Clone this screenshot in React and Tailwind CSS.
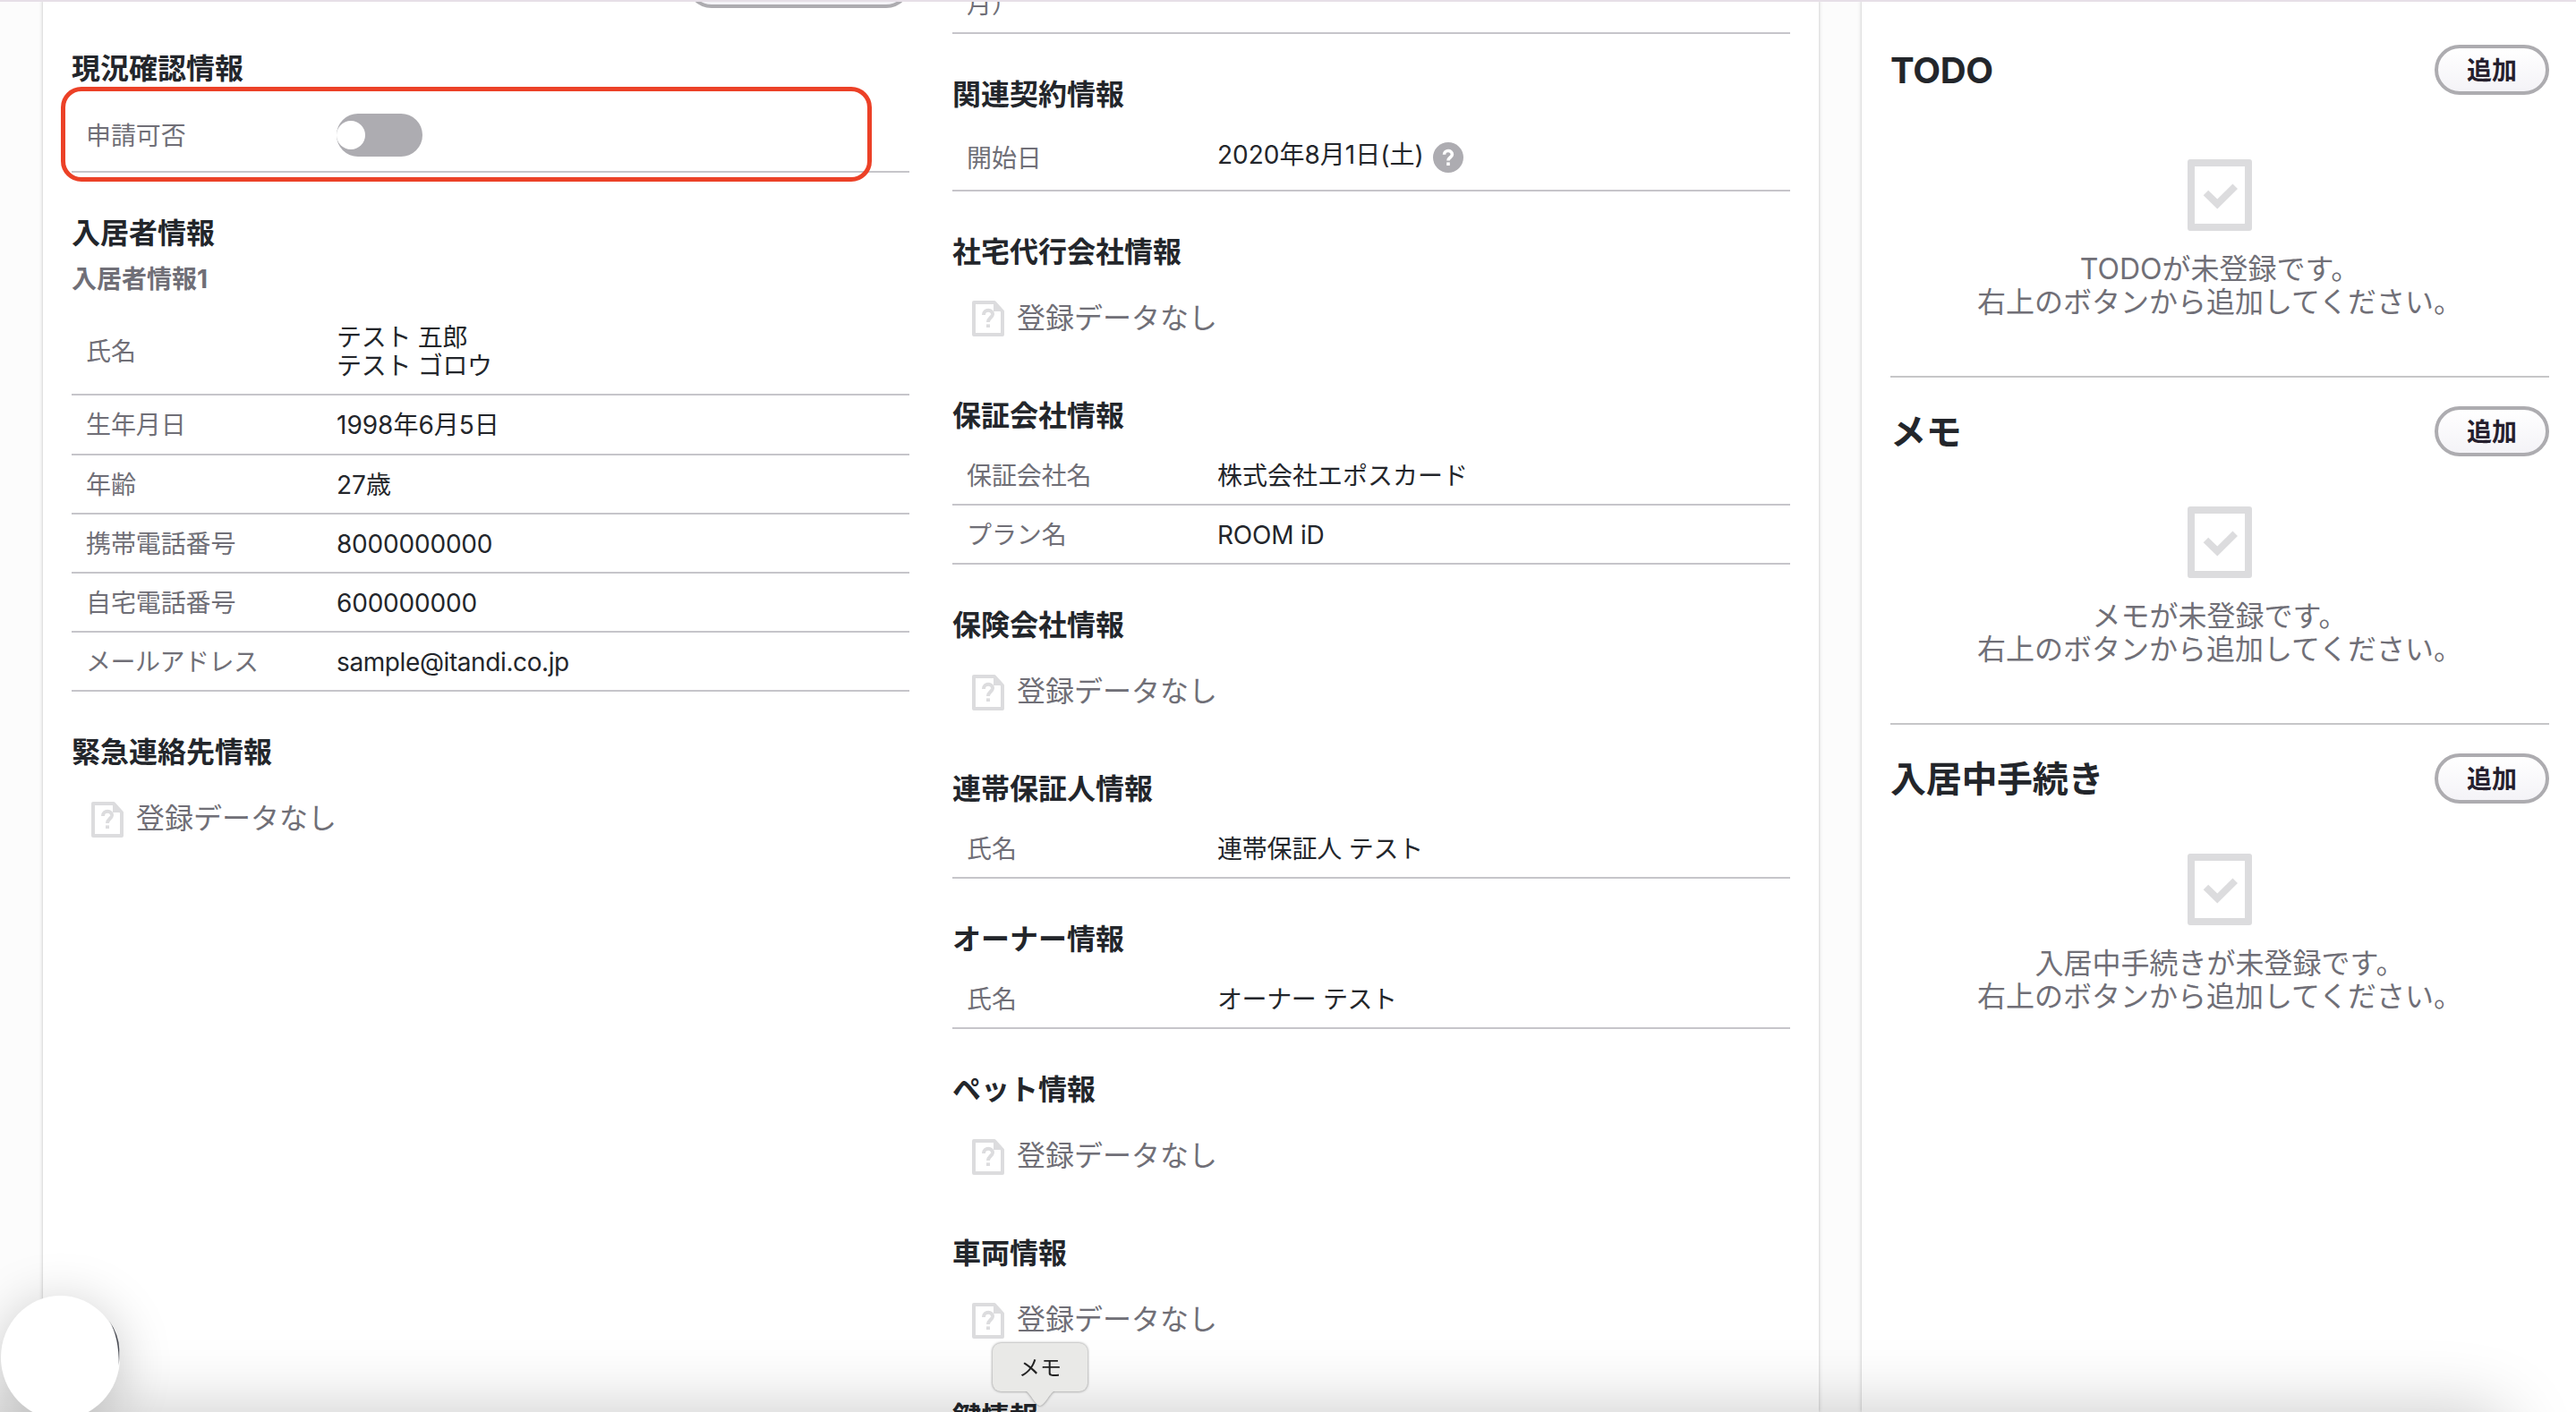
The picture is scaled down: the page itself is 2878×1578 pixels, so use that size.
function EmptyIcon() {
  return (
    <svg width="36" height="40" viewBox="0 0 36 40" className="block shrink-0">
      <path d="M2 2H25L34 12V38H2Z" fill="none" stroke="#dcdcde" strokeWidth="4" strokeLinejoin="round" />
      <path d="M24 2V12H34Z" fill="#dcdcde" />
      <path d="M13 16C13 8.8 23.4 9.4 23 15.4C22.6 19 18 19.4 18 24" fill="none" stroke="#dcdcde" strokeWidth="4" />
      <path d="M16 26.4H20V30H16Z" fill="#dcdcde" />
    </svg>
  );
}

function HelpIcon() {
  return (
    <svg width="34" height="34" viewBox="0 0 34 34" className="-ml-0.5 block shrink-0">
      <circle cx="17" cy="17" r="17" fill="#adacb1" />
      <path d="M12.5 13.8C12.5 8.1 21.5 8.2 21.4 13.6C21.3 17 17 17 17 20.4" fill="none" stroke="#fff" strokeWidth="3.6" />
      <path d="M15.2 22.4H18.8V26H15.2Z" fill="#fff" />
    </svg>
  );
}

function CheckIcon() {
  return (
    <svg width="72" height="80" viewBox="0 0 72 80" className="block">
      <path
        d="M3 0H69Q72 0 72 3V77Q72 80 69 80H3Q0 80 0 77V3Q0 0 3 0ZM8 8V72H64V8Z"
        fill="#dcdcde"
        fillRule="evenodd"
      />
      <path d="M17.7 40.3L23.2 34.8L33.3 44.5L50.5 27.6L56 33.1L33.3 55.5Z" fill="#dcdcde" />
    </svg>
  );
}

function Section({ title, children }) {
  return (
    <section className="mb-12">
      <h2 className="h-[38px] translate-y-px text-[32px] font-bold leading-[38px] whitespace-nowrap">{title}</h2>
      <div className="mt-4">{children}</div>
    </section>
  );
}

function Row({ label, children }) {
  return (
    <div className="flex items-center border-b-2 border-[#c6c5ca] py-4 pl-4 text-[28px] leading-[32.2px]">
      <div className="w-[280px] shrink-0 translate-y-px tracking-[-0.1px] text-[#706f77]">{label}</div>
      {typeof children === "string" ? <div className="translate-y-px">{children}</div> : children}
    </div>
  );
}

function Empty() {
  return (
    <div className="flex h-[80.8px] items-center gap-3.5 pl-[22px]">
      <EmptyIcon />
      <span className="text-[32px] leading-[36.8px] text-[#706f77]">登録データなし</span>
    </div>
  );
}

function SideSection({ title, message, first, last }) {
  return (
    <section className={last ? "" : "border-b-2 border-[#c6c6c8]"}>
      <div
        className={
          first
            ? "mb-[72px] flex h-14 items-center justify-between"
            : "mt-8 mb-14 flex h-14 items-center justify-between"
        }
      >
        <h2 className="translate-y-px text-[40px] font-bold leading-none tracking-[-0.3px]">{title}</h2>
        <button className="h-14 w-32 rounded-full border-4 border-[#adacb0] bg-linear-to-b from-white to-[#f4f3f7] text-[28px] font-bold leading-none text-[#26202e]">
          <span className="block translate-y-px">追加</span>
        </button>
      </div>
      <div className="flex h-[242px] flex-col items-center">
        <CheckIcon />
        <p className="mt-[25px] text-center text-[32px] leading-[36.8px] text-[#706f77]">
          {message}
          <br />
          右上のボタンから追加してください。
        </p>
      </div>
    </section>
  );
}

export default function App() {
  return (
    <div className={`relative h-[1578px] w-[2878px] overflow-hidden bg-[#fcfcfc] text-[#23262b] font-[Inter,"Noto_Sans_CJK_JP",sans-serif]`}>
      <div className="flex h-full gap-12 pl-12">
        <main className="flex w-[1984px] shrink-0 gap-12 bg-white px-8 shadow-[0_0_4px_rgba(0,0,0,0.25)]">
          <div className="w-[936px] pt-[57px]">
            <Section title="現況確認情報">
              <Row label="申請可否">
                <div className="flex h-12 w-24 items-center rounded-full bg-[#adacb1]">
                  <div className="size-8 rounded-full bg-white" />
                </div>
              </Row>
            </Section>
            <Section title="入居者情報">
              <h3 className="mb-4 translate-y-px text-[28px] font-bold leading-[33px] text-[#706f77]">入居者情報1</h3>
              <Row label="氏名">
                <div className="translate-y-px tracking-[-0.3px]">
                  テスト 五郎
                  <br />
                  テスト ゴロウ
                </div>
              </Row>
              <Row label="生年月日">1998年6月5日</Row>
              <Row label="年齢">27歳</Row>
              <Row label="携帯電話番号">
                <div className="translate-y-px tracking-[-0.2px]">8000000000</div>
              </Row>
              <Row label="自宅電話番号">
                <div className="translate-y-px tracking-[-0.2px]">600000000</div>
              </Row>
              <Row label={<span className="tracking-[-0.5px]">メールアドレス</span>}>
                <div className="translate-y-px tracking-[-0.4px]">sample@itandi.co.jp</div>
              </Row>
            </Section>
            <Section title="緊急連絡先情報">
              <Empty />
            </Section>
          </div>
          <div className="w-[936px]">
            <div className="mb-12 flex h-[38px] items-end border-b-2 border-[#c6c5ca] pb-[15px] pl-4 text-[28px] leading-[32.2px] text-[#706f77]">
              月）
            </div>
            <Section title="関連契約情報">
              <Row label="開始日">
                <div className="flex h-10 items-center gap-3">
                  <span className="pb-1.5">2020年8月1日(土)</span>
                  <HelpIcon />
                </div>
              </Row>
            </Section>
            <Section title="社宅代行会社情報">
              <Empty />
            </Section>
            <Section title="保証会社情報">
              <Row label="保証会社名">株式会社エポスカード</Row>
              <Row label="プラン名">
                <div className="translate-y-px tracking-[-0.2px]">ROOM iD</div>
              </Row>
            </Section>
            <Section title="保険会社情報">
              <Empty />
            </Section>
            <Section title="連帯保証人情報">
              <Row label="氏名">
                <div className="translate-y-px tracking-[-0.2px]">連帯保証人 テスト</div>
              </Row>
            </Section>
            <Section title="オーナー情報">
              <Row label="氏名">
                <div className="translate-y-px tracking-[-0.4px]">オーナー テスト</div>
              </Row>
            </Section>
            <Section title="ペット情報">
              <Empty />
            </Section>
            <Section title="車両情報">
              <Empty />
            </Section>
            <Section title="鍵情報" />
          </div>
        </main>
        <aside className="flex-1 bg-white pt-[50px] pr-[30px] pl-8 shadow-[0_0_4px_rgba(0,0,0,0.25)]">
          <SideSection title="TODO" message="TODOが未登録です。" first />
          <SideSection title="メモ" message="メモが未登録です。" />
          <SideSection title="入居中手続き" message="入居中手続きが未登録です。" last />
        </aside>
      </div>

      <div className="absolute top-[-47px] left-[767px] h-14 w-[251px] rounded-full border-4 border-[#adacb0] bg-[#f4f3f7]" />
      <div className="absolute inset-x-0 top-0 h-0.5 bg-[#e6dfe7]" />
      <div className="absolute top-[97px] left-[68px] h-[106px] w-[906px] rounded-[23px] border-[5px] border-[#ec4127]" />

      {/* Dock shadow along the bottom edge */}
      <div className="absolute top-[1578px] -left-[200px] h-[300px] w-[3000px] rounded-[30px] shadow-[0_0_80px_rgba(0,0,0,0.22)]" />

      <div className="absolute top-[1448px] left-px h-[138px] w-[133px] rounded-[50%] bg-white shadow-[0_8px_60px_rgba(0,0,0,0.22)]">
        <svg width="14" height="56" viewBox="0 0 14 56" className="absolute top-[26px] right-0">
          <path d="M2 2Q13 18 13.3 34Q13.6 44 12.8 52Q13 20 2 2Z" fill="#4b4d55" />
        </svg>
      </div>

      <div className="absolute top-[1501px] left-[1109px] h-[54px] w-[106px] rounded-[9px] bg-[#e9e9e7] text-center text-[24px] leading-[55px] text-[#222] drop-shadow-[0_0_1.5px_rgba(0,0,0,0.5)]">
        メモ
        <svg width="34" height="19" viewBox="0 0 34 19" className="absolute top-[53px] left-[36px]">
          <path d="M0 0C5 1 12 17 17 17C22 17 29 1 34 0Z" fill="#e9e9e7" />
        </svg>
      </div>
    </div>
  );
}
